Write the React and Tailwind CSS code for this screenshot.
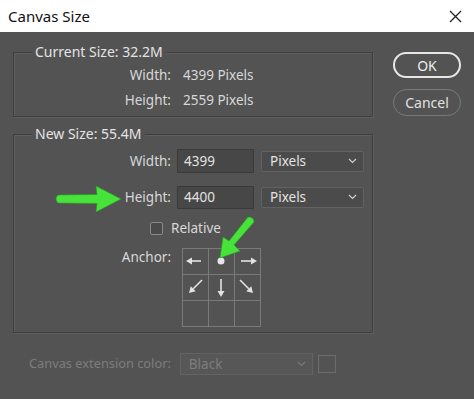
import React from "react";

function Chevron() {
  return (
    <svg width="9" height="6" viewBox="0 0 9 6" className="mr-[6px]">
      <path d="M1 1 L4.5 4.5 L8 1" fill="none" stroke="#cfcfcf" strokeWidth="1.2" />
    </svg>
  );
}

function Arrow({ x1, y1, x2, y2 }) {
  const dx = x2 - x1;
  const dy = y2 - y1;
  const len = Math.hypot(dx, dy);
  const ux = dx / len;
  const uy = dy / len;
  const hl = 6;
  const hw = 3.5;
  const bx = x2 - ux * hl;
  const by = y2 - uy * hl;
  const px = -uy * hw;
  const py = ux * hw;
  return (
    <g>
      <line x1={x1} y1={y1} x2={bx} y2={by} stroke="#e2e2e2" strokeWidth="1.6" />
      <polygon points={`${x2},${y2} ${bx + px},${by + py} ${bx - px},${by - py}`} fill="#e2e2e2" />
    </g>
  );
}

export default function App() {
  const font = { fontFamily: "'Noto Sans', 'Open Sans', Arial, sans-serif" };
  return (
    <div className="relative w-[474px] h-[399px] bg-[#535353] flex flex-col overflow-hidden" style={font}>
      {/* title bar */}
      <div className="h-[32px] bg-white flex items-center justify-between pl-[8px] pr-[12px] shrink-0">
        <span className="text-[15px] text-[#111] leading-none">Canvas Size</span>
        <svg width="13" height="13" viewBox="0 0 13 13">
          <path d="M1 1 L12 12 M12 1 L1 12" stroke="#222" strokeWidth="1.3" />
        </svg>
      </div>

      <div className="flex flex-1">
        {/* left column */}
        <div className="flex flex-col pl-[13px] w-[373px]">
          {/* Current size */}
          <div className="relative mt-[20px] h-[65px] border border-[#3f3f3f] shadow-[inset_1px_1px_0_#5e5e5e,1px_1px_0_#5e5e5e]">
            <span className="absolute -top-[11px] left-[18px] px-[3px] bg-[#535353] text-[14px] text-[#e4e4e4] leading-[20px]">
              Current Size: 32.2M
            </span>
            <div className="flex flex-col pt-[12px] gap-[5px] text-[13.5px] text-[#d8d8d8] leading-[20px]">
              <div className="flex">
                <span className="w-[157px] text-right">Width:</span>
                <span className="ml-[12px]">4399 Pixels</span>
              </div>
              <div className="flex">
                <span className="w-[157px] text-right">Height:</span>
                <span className="ml-[12px]">2559 Pixels</span>
              </div>
            </div>
          </div>

          {/* New size */}
          <div className="relative mt-[17px] h-[199px] border border-[#3f3f3f] shadow-[inset_1px_1px_0_#5e5e5e,1px_1px_0_#5e5e5e]">
            <span className="absolute -top-[11px] left-[18px] px-[3px] bg-[#535353] text-[14px] text-[#e4e4e4] leading-[20px]">
              New Size: 55.4M
            </span>
            <div className="flex flex-col pt-[14px] text-[13.5px] text-[#d8d8d8]">
              <div className="flex items-center h-[24px]">
                <span className="w-[157px] text-right">Width:</span>
                <div className="ml-[6px] w-[77px] h-[24px] bg-[#474747] border border-[#3a3a3a] flex items-center pl-[6px] text-[#e2e2e2]">4399</div>
                <div className="ml-[7px] w-[103px] h-[21px] bg-[#4b4b4b] border border-[#626262] rounded-[2px] flex items-center justify-between pl-[8px] text-[#e2e2e2]">
                  <span>Pixels</span>
                  <Chevron />
                </div>
              </div>
              <div className="flex items-center h-[24px] mt-[12px]">
                <span className="w-[157px] text-right">Height:</span>
                <div className="ml-[6px] w-[77px] h-[23px] bg-[#474747] border border-[#3a3a3a] flex items-center pl-[6px] text-[#e2e2e2]">4400</div>
                <div className="ml-[7px] w-[103px] h-[21px] bg-[#4b4b4b] border border-[#626262] rounded-[2px] flex items-center justify-between pl-[8px] text-[#e2e2e2]">
                  <span>Pixels</span>
                  <Chevron />
                </div>
              </div>
              <div className="flex items-center h-[20px] mt-[9px] pl-[136px]">
                <div className="w-[13px] h-[13px] border border-[#8a8a8a] rounded-[2px] bg-[#4a4a4a]" />
                <span className="ml-[8px]">Relative</span>
              </div>
              <div className="flex mt-[10px]">
                <span className="w-[157px] text-right leading-[18px]">Anchor:</span>
                <div className="ml-[11px] grid grid-cols-[26px_26px_26px] grid-rows-[26px_26px_26px] border-l border-t border-[#7a7a7a]">
                  {Array.from({ length: 9 }).map((_, i) => (
                    <div key={i} className="border-r border-b border-[#7a7a7a]" />
                  ))}
                </div>
              </div>
            </div>
          </div>

          {/* Extension color */}
          <div className="flex items-center mt-[20px] pl-[16px] text-[12.8px] text-[#7d7d7d]">
            <span>Canvas extension color:</span>
            <div className="ml-[9px] w-[133px] h-[22px] bg-[#575757] border border-[#636363] flex items-center justify-between pl-[8px] text-[13.5px]">
              <span>Black</span>
              <svg width="9" height="6" viewBox="0 0 9 6" className="mr-[6px]">
                <path d="M1 1 L4.5 4.5 L8 1" fill="none" stroke="#7a7a7a" strokeWidth="1.2" />
              </svg>
            </div>
            <div className="ml-[5px] w-[18px] h-[18px] border border-[#6c6c6c]" />
          </div>
        </div>

        {/* right column */}
        <div className="flex flex-col items-start pl-[20px] pt-[20px] gap-[11px]">
          <div className="w-[68px] h-[26px] rounded-full border-2 border-[#e6e6e6] flex items-center justify-center text-[14px] text-[#eeeeee]">OK</div>
          <div className="w-[68px] h-[27px] rounded-full border border-[#7b7b7b] flex items-center justify-center text-[14px] text-[#e0e0e0]">Cancel</div>
        </div>
      </div>

      {/* overlay drawings: anchor arrows and green annotation arrows */}
      <svg className="absolute left-0 top-0 pointer-events-none" width="474" height="399" viewBox="0 0 474 399">
        <Arrow x1={201} y1={261} x2={186} y2={261} />
        <circle cx="221" cy="261" r="3.5" fill="#e6e6e6" />
        <Arrow x1={241} y1={261} x2={257} y2={261} />
        <Arrow x1={202} y1={280} x2={189} y2={293} />
        <Arrow x1={221} y1={279} x2={221} y2={297} />
        <Arrow x1={240} y1={280} x2={253} y2={293} />

        <g fill="#47e23a" stroke="#2e9a26" strokeWidth="0.6" strokeLinejoin="round">
          <path d="M58 195 L97 194.5 L96 186 L121 199 L96 212 L97 203.5 L58 203 Q54 199 58 195 Z" />
          <path d="M248 217 Q254 217 254 222 L234 245 L240 251 L220 258 L223 237 L229 241 L248 217 Z" />
        </g>
      </svg>
    </div>
  );
}
